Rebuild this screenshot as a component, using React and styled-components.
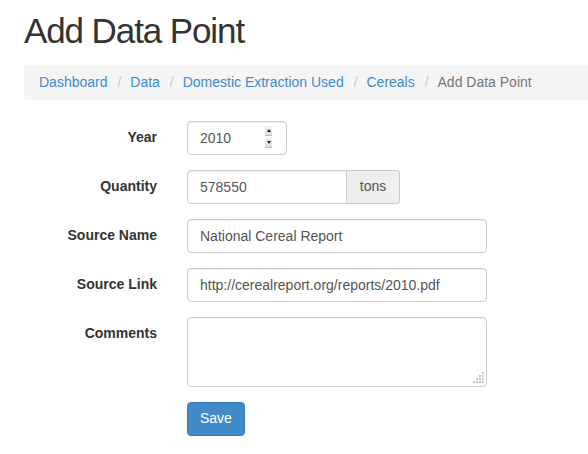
import styled, { createGlobalStyle } from 'styled-components';

const GlobalStyle = createGlobalStyle`
  * { box-sizing: border-box; }
  body {
    margin: 0;
    background: #fff;
    color: #333;
    font-family: "Liberation Sans", Helvetica, Arial, sans-serif;
    font-size: 14px;
    line-height: 1.428571;
    overflow: hidden;
  }
`;

const Page = styled.div`
  padding-left: 24px;
`;

const Title = styled.h1`
  margin: 12px 0 14px;
  font-size: 35px;
  font-weight: 500;
  letter-spacing: -1.1px;
  line-height: 1.1;
  color: #333;
`;

const Breadcrumb = styled.ol`
  display: flex;
  margin: 0 -20px 21px 0;
  padding: 8px 15px;
  list-style: none;
  background: #f5f5f5;
  border-radius: 4px;
`;

const Crumb = styled.li`
  color: ${(p) => (p.$active ? '#777' : '#428bca')};

  &:not(:first-child)::before {
    content: "/\\00a0";
    padding: 0 5px;
    margin-left: 5px;
    color: #ccc;
  }
`;

const Form = styled.form`
  display: grid;
  grid-template-columns: 148px 1fr;
  column-gap: 15px;
  row-gap: 15px;
  align-items: start;
  justify-items: start;
`;

const Label = styled.label`
  justify-self: stretch;
  padding: 7px 15px 0 0;
  text-align: right;
  font-weight: bold;
`;

const Field = styled.div`
  display: flex;
`;

const Input = styled.input`
  display: block;
  width: ${(p) => p.$width}px;
  height: 34px;
  padding: 6px 12px;
  font: inherit;
  color: #555;
  background: #fff;
  border: 1px solid #ccc;
  border-radius: ${(p) => (p.$grouped ? '4px 0 0 4px' : '4px')};
  box-shadow: inset 0 1px 1px rgba(0, 0, 0, 0.075);
  outline: none;
`;

const NumberBox = styled.div`
  position: relative;
`;

const Spinner = styled.div`
  position: absolute;
  top: 5px;
  right: 15px;
  display: flex;
  flex-direction: column;
  gap: 2px;
`;

const SpinButton = styled.span`
  display: flex;
  align-items: center;
  justify-content: center;
  width: 7px;
  height: 10px;
  background: linear-gradient(#f2f2f2, #dddddd);
  border-bottom: 1px solid #bdbdbd;

  &::after {
    content: "";
    border-left: 2.5px solid transparent;
    border-right: 2.5px solid transparent;
    ${(p) =>
      p.$up
        ? 'border-bottom: 3px solid #222;'
        : 'border-top: 3px solid #222;'}
  }
`;

const Addon = styled.span`
  display: flex;
  align-items: center;
  justify-content: center;
  width: 53px;
  height: 34px;
  color: #555;
  background: #eee;
  border: 1px solid #ccc;
  border-left: 0;
  border-radius: 0 4px 4px 0;
`;

const AreaBox = styled.div`
  position: relative;
`;

const TextArea = styled.textarea`
  display: block;
  width: 300px;
  height: 70px;
  padding: 6px 12px;
  font: inherit;
  color: #555;
  border: 1px solid #ccc;
  border-radius: 4px;
  box-shadow: inset 0 1px 1px rgba(0, 0, 0, 0.075);
  outline: none;
  resize: none;
`;

const Grip = styled.svg`
  position: absolute;
  right: 3px;
  bottom: 3px;
  pointer-events: none;
`;

const Button = styled.button`
  height: 34px;
  padding: 6px 12px;
  font: inherit;
  color: #fff;
  background: #428bca;
  border: 1px solid #357ebd;
  border-radius: 4px;
  cursor: pointer;
`;

const crumbs = ['Dashboard', 'Data', 'Domestic Extraction Used', 'Cereals'];

const gripDots = [
  [8, 0], [8, 3], [5, 3], [8, 6], [5, 6], [2, 6], [8, 9], [5, 9], [2, 9], [-1, 9],
];

export default function App() {
  return (
    <Page>
      <GlobalStyle />
      <Title>Add Data Point</Title>
      <Breadcrumb>
        {crumbs.map((c) => (
          <Crumb key={c}>{c}</Crumb>
        ))}
        <Crumb $active>Add Data Point</Crumb>
      </Breadcrumb>
      <Form onSubmit={(e) => e.preventDefault()}>
        <Label>Year</Label>
        <NumberBox>
          <Input $width={100} defaultValue="2010" />
          <Spinner>
            <SpinButton $up />
            <SpinButton />
          </Spinner>
        </NumberBox>

        <Label>Quantity</Label>
        <Field>
          <Input $width={160} $grouped defaultValue="578550" />
          <Addon>tons</Addon>
        </Field>

        <Label>Source Name</Label>
        <Input $width={300} defaultValue="National Cereal Report" />

        <Label>Source Link</Label>
        <Input $width={300} defaultValue="http://cerealreport.org/reports/2010.pdf" />

        <Label>Comments</Label>
        <AreaBox>
          <TextArea />
          <Grip width="12" height="12" viewBox="-2 0 12 12">
            {gripDots.map(([x, y]) => (
              <rect key={`${x}-${y}`} x={x} y={y} width="2" height="2" fill="#c8c8c8" />
            ))}
          </Grip>
        </AreaBox>

        <span />
        <Button type="submit">Save</Button>
      </Form>
    </Page>
  );
}
